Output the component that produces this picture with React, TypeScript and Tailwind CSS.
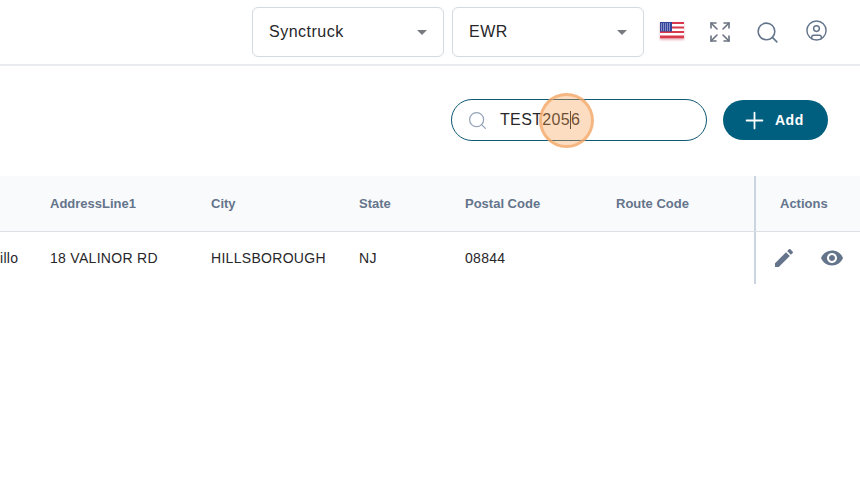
import React from 'react';
import { Expand, Search, CircleUser, Plus } from 'lucide-react';

const columns = ['AddressLine1', 'City', 'State', 'Postal Code', 'Route Code'];
const values = ['18 VALINOR RD', 'HILLSBOROUGH', 'NJ', '08844', ''];
const gridCols = 'grid grid-cols-[50px_161px_148px_106px_151px_138px_1fr]';

const Select: React.FC<{ label: string }> = ({ label }) => (
  <div className="w-[192px] h-[50px] border border-[#d5d9e0] rounded-md bg-white flex items-center justify-between pl-4 pr-4">
    <span className="text-base tracking-[0.5px] text-[#27272a]">{label}</span>
    <span className="w-0 h-0 border-x-[5px] border-x-transparent border-t-[5px] border-t-[#777b80]" />
  </div>
);

const Flag = () => (
  <svg width="26" height="20" viewBox="0 0 26 20" className="drop-shadow-[0_1px_1px_rgba(180,40,60,0.35)]">
    <rect x="1" y="1" width="24" height="17" fill="#fff" />
    <rect x="1" y="1" width="24" height="2" fill="#d8394c" />
    <rect x="1" y="5.5" width="24" height="2" fill="#d8394c" />
    <rect x="1" y="10" width="24" height="2" fill="#d8394c" />
    <rect x="1" y="14.5" width="24" height="3" fill="#d8394c" />
    <rect x="1" y="1" width="12" height="9.5" fill="#33449b" />
    <path d="M2 3h10M2 5h10M2 7h10M2 9h10" stroke="#d5daf0" strokeWidth="1" strokeDasharray="1 1" />
  </svg>
);

const App: React.FC = () => {
  return (
    <div className="relative w-[860px] h-[480px] overflow-hidden bg-white font-['Liberation_Sans',Arial,sans-serif]">
      <header className="h-[66px] border-b-2 border-[#e9ebee] flex items-start justify-end pt-[7px]">
        <div className="flex gap-2 mr-[15px]">
          <Select label="Synctruck" />
          <Select label="EWR" />
        </div>
        <div className="flex items-center w-[201px] h-[48px] text-[#64748b]">
          <div className="w-[26px]"><Flag /></div>
          <Expand size={24} strokeWidth={1.6} className="ml-[23px] mt-0.5 text-[#6b7280]" />
          <Search size={25} strokeWidth={1.5} className="ml-[23px] mt-0.5" />
          <CircleUser size={23} strokeWidth={1.5} className="ml-[25px] -mt-0.5" />
        </div>
      </header>

      <div className="flex justify-end items-center gap-4 pr-8 pt-[33px]">
        <div className="w-[256px] h-[42px] rounded-full border border-[#0f5a75] flex items-center pl-[15px]">
          <Search size={21} strokeWidth={1.4} className="text-[#94a3b8]" />
          <span className="ml-[12px] text-base tracking-[0.35px] text-[#27272a] flex items-center">
            TEST205<span className="inline-block w-px h-[18px] bg-[#27272a]" />6
          </span>
        </div>
        <button className="w-[105px] h-10 rounded-full bg-[#005f7f] text-white flex items-center pl-[18px] gap-[7px] text-sm font-bold tracking-[0.5px]">
          <Plus size={27} strokeWidth={1.6} />
          Add
        </button>
      </div>

      <div className={`${gridCols} mt-[35px] h-[56px] bg-[#f8fafc] border-b border-[#dcdfe4] items-center text-[13px] font-bold text-[#64748b]`}>
        <div />
        {columns.map((c) => (
          <div key={c}>{c}</div>
        ))}
        <div className="h-full flex items-center pl-[24px] border-l-2 border-[#cbd5e1]">Actions</div>
      </div>
      <div className={`${gridCols} h-[52px] items-center text-sm tracking-[0.3px] text-[#27272a]`}>
        <div className="text-right pr-8">illo</div>
        {values.map((v, i) => (
          <div key={i}>{v}</div>
        ))}
        <div className="h-full flex items-center pl-[16px] gap-[24px] border-l-2 border-[#cbd5e1] text-[#64748b]">
          <svg width="24" height="24" viewBox="0 0 24 24" fill="currentColor">
            <path d="M3 17.25V21h3.75L17.81 9.94l-3.75-3.75L3 17.25zM20.71 7.04c.39-.39.39-1.02 0-1.41l-2.34-2.34c-.39-.39-1.02-.39-1.41 0l-1.83 1.83 3.75 3.75 1.83-1.83z" />
          </svg>
          <svg width="24" height="24" viewBox="0 0 24 24" fill="currentColor">
            <path d="M12 4.5C7 4.5 2.73 7.61 1 12c1.73 4.39 6 7.5 11 7.5s9.27-3.11 11-7.5c-1.73-4.39-6-7.5-11-7.5zM12 17c-2.76 0-5-2.24-5-5s2.24-5 5-5 5 2.24 5 5-2.24 5-5 5zm0-8c-1.66 0-3 1.34-3 3s1.34 3 3 3 3-1.34 3-3-1.34-3-3-3z" />
          </svg>
        </div>
      </div>

      {/* click marker over the search box */}
      <div className="absolute left-[539px] top-[93px] w-[55px] h-[55px] rounded-full bg-[#f59e4c]/35 border-[3px] border-[#f3a565]/70" />
    </div>
  );
};

export default App;
